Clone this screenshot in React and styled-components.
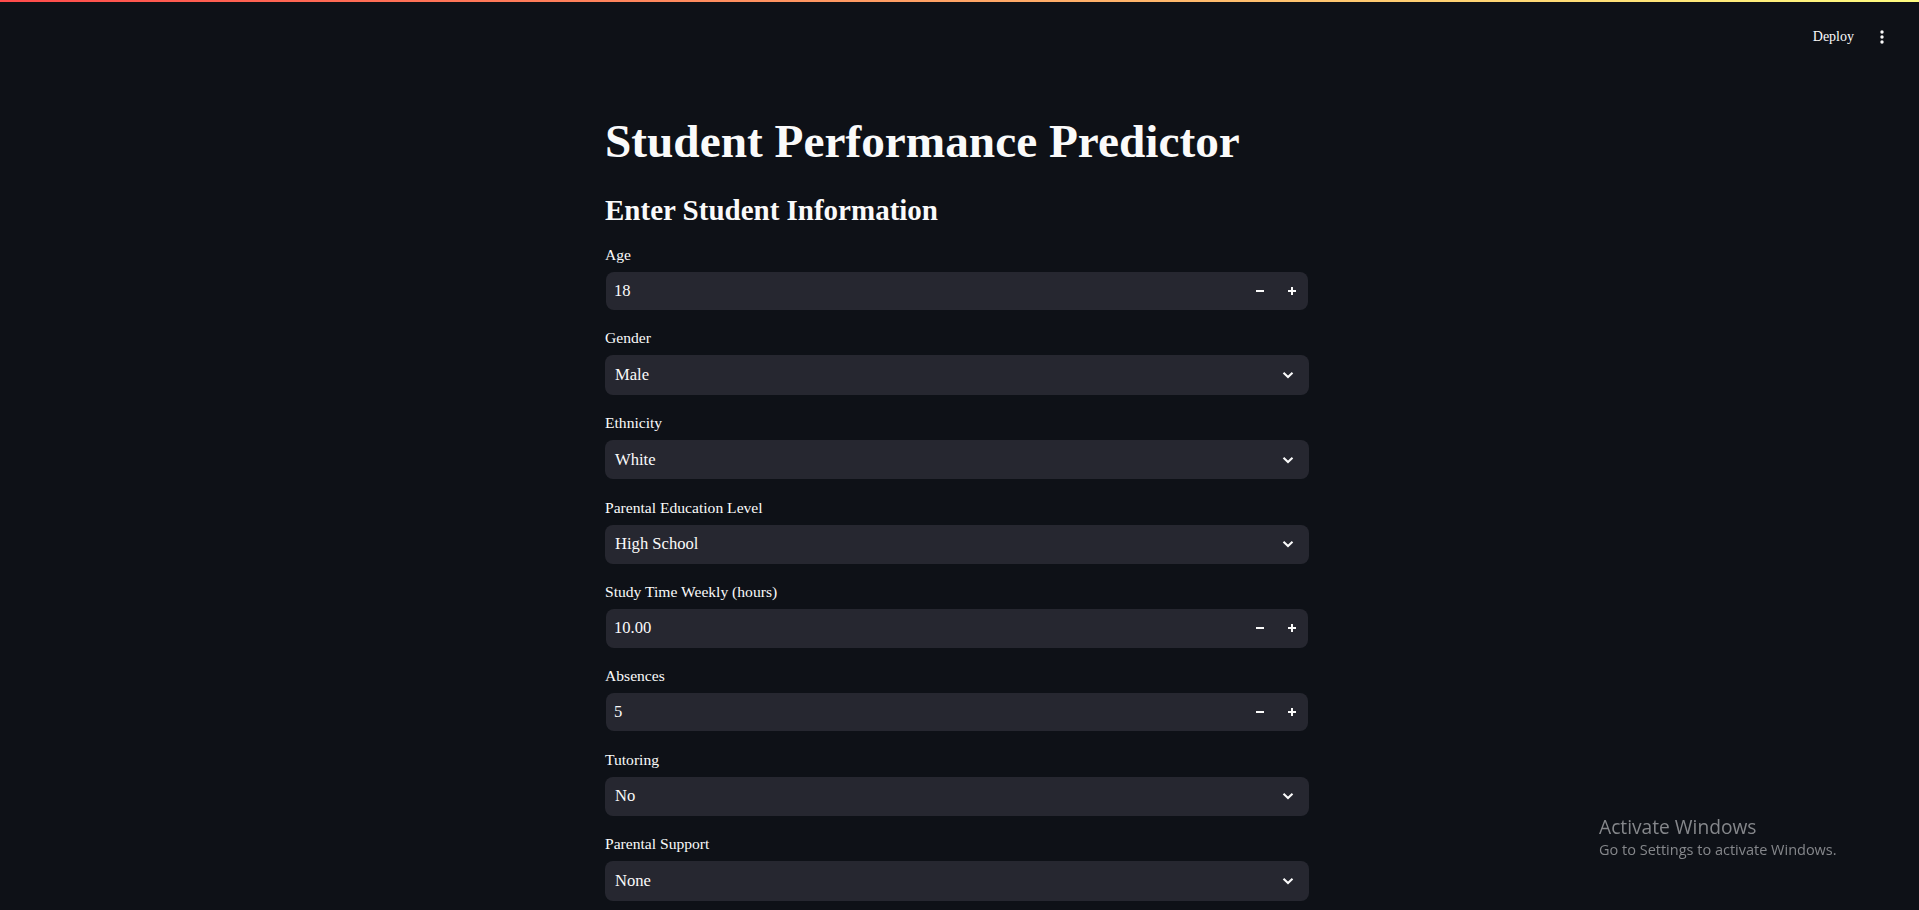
import styled, { createGlobalStyle } from 'styled-components';

const GlobalStyle = createGlobalStyle`
    html, body {
        margin: 0;
        padding: 0;
        background: #0e1117;
        overflow: hidden;
    }
    body {
        font-family: "Liberation Serif", "Times New Roman", serif;
        color: #fafafa;
    }
    * {
        box-sizing: border-box;
    }
`;

const fields = [
    { label: 'Age', type: 'number', value: '18' },
    { label: 'Gender', type: 'select', value: 'Male' },
    { label: 'Ethnicity', type: 'select', value: 'White' },
    { label: 'Parental Education Level', type: 'select', value: 'High School' },
    { label: 'Study Time Weekly (hours)', type: 'number', value: '10.00' },
    { label: 'Absences', type: 'number', value: '5' },
    { label: 'Tutoring', type: 'select', value: 'No' },
    { label: 'Parental Support', type: 'select', value: 'None' },
];

const Page = styled.div`
    min-height: 100vh;
    display: flex;
    flex-direction: column;
`;

const Decoration = styled.div`
    height: 2px;
    background: linear-gradient(90deg, rgb(255, 75, 75), rgb(255, 253, 128));
`;

const Header = styled.header`
    height: 58px;
    padding: 12px 21px 0 0;
    display: flex;
    justify-content: flex-end;
    align-items: center;
`;

const DeployButton = styled.button`
    background: none;
    border: none;
    color: #fafafa;
    font-family: inherit;
    font-size: 14px;
    padding: 0 12px;
    height: 32px;
    cursor: pointer;
`;

const MenuButton = styled.button`
    width: 32px;
    height: 32px;
    background: none;
    border: none;
    padding: 0;
    display: flex;
    align-items: center;
    justify-content: center;
    color: #fafafa;
`;

const Main = styled.main`
    display: flex;
    justify-content: center;
    padding: 53px 5px 0 0;
`;

const Block = styled.div`
    width: 704px;
    display: flex;
    flex-direction: column;
`;

const Title = styled.h1`
    margin: 0;
    font-size: 47.3px;
    line-height: 1.2;
    font-weight: 700;
`;

const Subheader = styled.h3`
    margin: 23px 0 15px;
    font-size: 29px;
    line-height: 1.2;
    font-weight: 700;
`;

const Form = styled.div`
    display: flex;
    flex-direction: column;
    gap: 16.4px;
`;

const Field = styled.div`
    display: flex;
    flex-direction: column;
`;

const Label = styled.label`
    height: 24px;
    line-height: 24px;
    font-size: 15.6px;
    margin-bottom: 5px;
`;

const Box = styled.div`
    height: ${(p) => (p.$select ? '39.3px' : '38.3px')};
    margin-left: ${(p) => (p.$select ? '0' : '1px')};
    margin-right: ${(p) => (p.$select ? '0' : '1px')};
    background: #262730;
    border-radius: 8px;
    display: flex;
    align-items: center;
    padding-left: ${(p) => (p.$select ? '10px' : '8px')};
    font-size: 16.6px;
`;

const Value = styled.span`
    flex: 1;
`;

const StepButton = styled.button`
    width: 32px;
    height: 100%;
    background: none;
    border: none;
    padding: 0;
    display: flex;
    align-items: center;
    justify-content: center;
    color: #fafafa;
`;

const Chevron = styled.span`
    width: 20px;
    margin-right: 11px;
    display: flex;
    justify-content: center;
    color: #fafafa;
`;

const Watermark = styled.div`
    position: fixed;
    left: 1599px;
    top: 814px;
    font-family: "Open Sans", "Noto Sans", sans-serif;
    color: #85878b;
`;

const WatermarkTitle = styled.div`
    font-size: 19.2px;
    line-height: 26px;
`;

const WatermarkText = styled.div`
    font-size: 14.5px;
    line-height: 20px;
`;

const Dots = () => (
    <svg width="4" height="14" viewBox="0 0 4 14">
        <circle cx="2" cy="2" r="1.7" fill="currentColor" />
        <circle cx="2" cy="7" r="1.7" fill="currentColor" />
        <circle cx="2" cy="12" r="1.7" fill="currentColor" />
    </svg>
);

const NumberBox = ({ value }) => (
    <Box>
        <Value>{value}</Value>
        <StepButton aria-label="decrement">
            <svg width="10" height="10" viewBox="0 0 10 10">
                <path d="M1 5h8" stroke="currentColor" strokeWidth="2" />
            </svg>
        </StepButton>
        <StepButton aria-label="increment">
            <svg width="10" height="10" viewBox="0 0 10 10">
                <path d="M1 5h8M5 1v8" stroke="currentColor" strokeWidth="2" />
            </svg>
        </StepButton>
    </Box>
);

const SelectBox = ({ value }) => (
    <Box $select>
        <Value>{value}</Value>
        <Chevron>
            <svg width="12" height="8" viewBox="0 0 12 8">
                <path
                    d="M1.5 1.8L6 6l4.5-4.2"
                    fill="none"
                    stroke="currentColor"
                    strokeWidth="2.1"
                />
            </svg>
        </Chevron>
    </Box>
);

export default function App() {
    return (
        <Page>
            <GlobalStyle />
            <Decoration />
            <Header>
                <DeployButton>Deploy</DeployButton>
                <MenuButton>
                    <Dots />
                </MenuButton>
            </Header>
            <Main>
                <Block>
                    <Title>Student Performance Predictor</Title>
                    <Subheader>Enter Student Information</Subheader>
                    <Form>
                        {fields.map((f) => (
                            <Field key={f.label}>
                                <Label>{f.label}</Label>
                                {f.type === 'number' ? (
                                    <NumberBox value={f.value} />
                                ) : (
                                    <SelectBox value={f.value} />
                                )}
                            </Field>
                        ))}
                    </Form>
                </Block>
            </Main>
            <Watermark>
                <WatermarkTitle>Activate Windows</WatermarkTitle>
                <WatermarkText>Go to Settings to activate Windows.</WatermarkText>
            </Watermark>
        </Page>
    );
}
